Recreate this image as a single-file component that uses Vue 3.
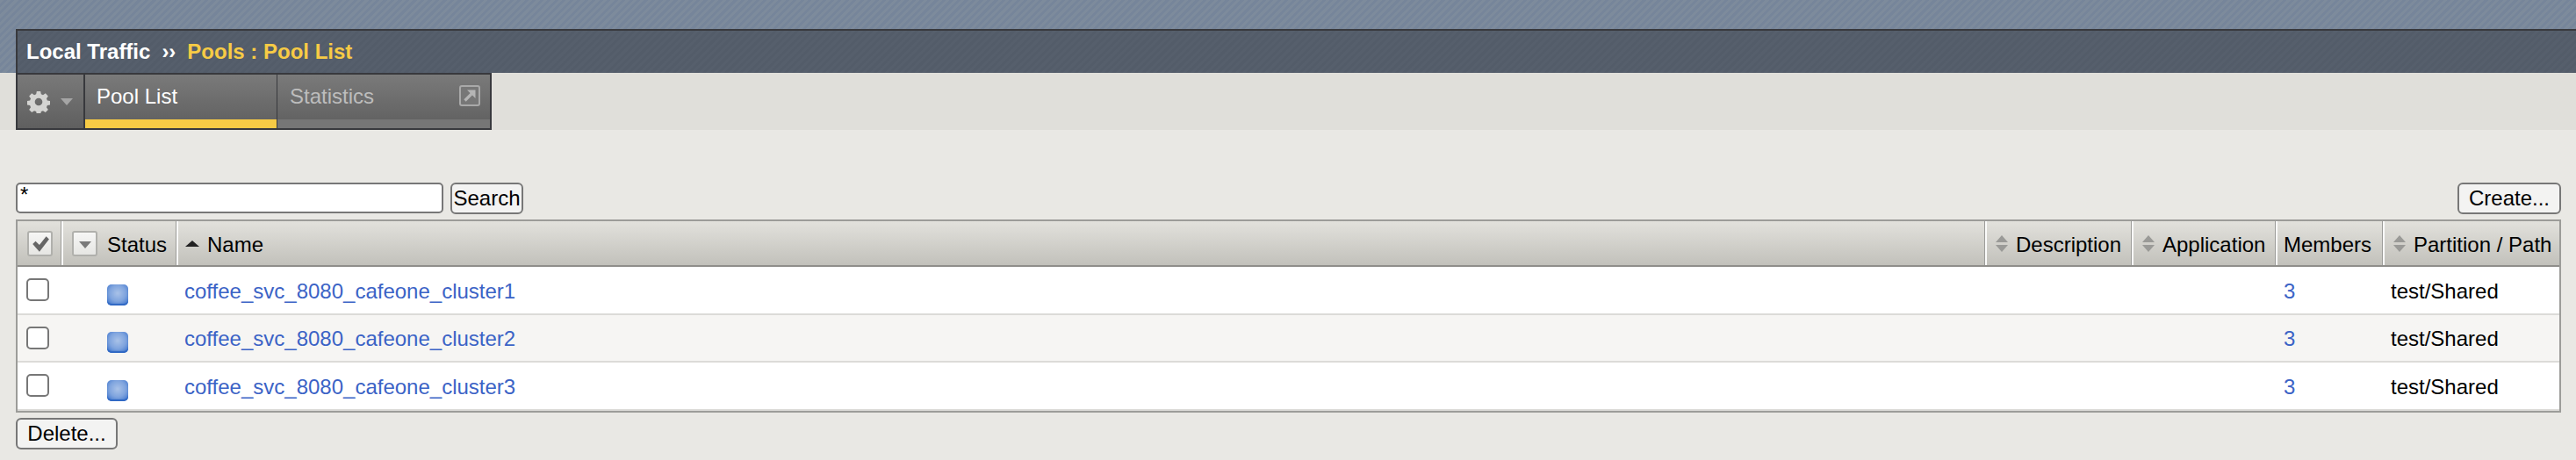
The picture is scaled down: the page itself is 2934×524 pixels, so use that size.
<script setup>
const pools = [
  { name: "coffee_svc_8080_cafeone_cluster1", members: 3, path: "test/Shared" },
  { name: "coffee_svc_8080_cafeone_cluster2", members: 3, path: "test/Shared" },
  { name: "coffee_svc_8080_cafeone_cluster3", members: 3, path: "test/Shared" },
];
</script>

<template>
  <div class="page">
    <div class="banner">
      <div class="crumbs">
        <span class="crumb-root">Local Traffic</span>
        <span class="crumb-sep">››</span>
        <span class="crumb-current">Pools : Pool List</span>
      </div>
    </div>

    <div class="tabbar">
      <div class="tabs">
        <div class="tab-menu">
          <svg class="gear" width="26" height="26" viewBox="0 0 24 24">
            <path
              fill="#d4d4d2"
              fill-rule="evenodd"
              d="M10 1h4l.6 3 2 .8 2.6-1.7 2.8 2.8-1.7 2.6.8 2 3 .6v4l-3 .6-.8 2 1.7 2.6-2.8 2.8-2.6-1.7-2 .8-.6 3h-4l-.6-3-2-.8-2.6 1.7-2.8-2.8 1.7-2.6-.8-2-3-.6v-4l3-.6.8-2-1.7-2.6 2.8-2.8 2.6 1.7 2-.8zM12 8a4 4 0 1 0 0 8 4 4 0 0 0 0-8z"
            />
          </svg>
          <span class="menu-arrow"></span>
        </div>
        <div class="tab active">Pool List</div>
        <div class="tab stats">
          <span>Statistics</span>
          <svg class="soft" width="24" height="24" viewBox="0 0 24 24">
            <rect x="1" y="1" width="22" height="22" rx="2" fill="#777" stroke="#a9a9a9" stroke-width="2" />
            <path d="M6.5 17.5l8-8" stroke="#b5b5b5" stroke-width="3.2" fill="none" />
            <path d="M9 5.5h9.5V15z" fill="#b5b5b5" />
          </svg>
        </div>
      </div>
    </div>

    <div class="content">
      <div class="toolbar">
        <input class="search" type="text" value="*" />
        <button class="btn search-btn">Search</button>
        <button class="btn create-btn">Create...</button>
      </div>

      <div class="list">
        <div class="row head">
          <div class="cell">
            <span class="head-box">
              <svg class="soft" width="22" height="20" viewBox="0 0 20 18">
                <path d="M2 9l3-3 4 4 7-9 3 3-10 13z" fill="#666" />
              </svg>
            </span>
          </div>
          <div class="cell status-head">
            <span class="head-box small"><span class="box-arrow"></span></span>
            <span>Status</span>
          </div>
          <div class="cell name-head"><span class="sort-up"></span>Name</div>
          <div class="cell sortable"><span class="sort-both"></span>Description</div>
          <div class="cell sortable"><span class="sort-both"></span>Application</div>
          <div class="cell members-head">Members</div>
          <div class="cell sortable"><span class="sort-both"></span>Partition / Path</div>
        </div>

        <div v-for="pool in pools" :key="pool.name" class="row item">
          <div class="cell check-cell"><input class="check" type="checkbox" /></div>
          <div class="cell status-cell"><span class="status-dot"></span></div>
          <div class="cell name-cell"><a class="link">{{ pool.name }}</a></div>
          <div class="cell"></div>
          <div class="cell"></div>
          <div class="cell members-cell"><a class="link">{{ pool.members }}</a></div>
          <div class="cell path-cell">{{ pool.path }}</div>
        </div>
      </div>

      <button class="btn delete-btn">Delete...</button>
    </div>
  </div>
</template>

<style>
html,
body {
  margin: 0;
  background: #e9e8e4;
  overflow: hidden;
}
</style>

<style scoped>
.page {
  height: 524px;
  overflow: hidden;
  font-family: "Liberation Sans", Arial, sans-serif;
  background: #e9e8e4;
}

/* 顶部条纹区 */
.banner {
  box-sizing: border-box;
  height: 83px;
  padding: 33px 0 0 18px;
  background: repeating-linear-gradient(135deg, #7d8b9c 0 3px, #76859a 3px 6px);
}
.crumbs {
  box-sizing: border-box;
  height: 50px;
  display: flex;
  align-items: center;
  padding-left: 10px;
  border: 2px solid #38393d;
  border-right: 0;
  border-bottom: 0;
  font-size: 24px;
  font-weight: bold;
  background: repeating-linear-gradient(135deg, #565f6c 0 3px, #535c69 3px 6px);
}
.crumb-root {
  color: #fff;
}
.crumb-sep {
  color: #fff;
  margin: 0 13px;
}
.crumb-current {
  color: #f7cb45;
}

/* 标签栏 */
.tabbar {
  height: 65px;
  padding-left: 18px;
  background: #e0dfda;
}
.tabs {
  box-sizing: border-box;
  width: 542px;
  height: 65px;
  display: flex;
  border: 2px solid #38393d;
  font-size: 24px;
  background: #38393d;
}
.tab-menu {
  box-sizing: border-box;
  width: 75px;
  flex: none;
  display: flex;
  align-items: center;
  gap: 12px;
  padding-left: 11px;
  background: linear-gradient(#797979, #5f5f5f);
}
.gear,
.soft {
  filter: blur(0.5px);
}
.menu-arrow {
  width: 0;
  height: 0;
  border: 7px solid transparent;
  border-top: 8px solid #a5a5a5;
  border-bottom: 0;
}
.tab {
  box-sizing: border-box;
  padding-top: 7px;
  padding-left: 13px;
  background: linear-gradient(#7a7a7a, #636363);
  line-height: 36px;
}
.tab.active {
  width: 218px;
  margin-left: 2px;
  color: #fff;
  border-bottom: 10px solid #f7cb45;
}
.tab.stats {
  flex: 1;
  margin-left: 1px;
  display: flex;
  align-items: flex-start;
  justify-content: space-between;
  padding-right: 11px;
  padding-left: 14px;
  color: #bdbdbd;
  border-bottom: 10px solid #767676;
}
.tab.stats svg {
  margin-top: 5px;
}

/* 内容区 */
.content {
  width: 2899px;
  padding: 60px 0 0 18px;
}
.toolbar {
  display: flex;
  align-items: stretch;
  height: 35px;
  margin-bottom: 7px;
}
.search {
  box-sizing: border-box;
  width: 487px;
  height: 35px;
  padding: 0 0 8px 3px;
  border: 2px solid #777;
  border-radius: 5px;
  background: #fff;
  font: 24px "Liberation Sans", Arial, sans-serif;
  color: #000;
  outline: none;
}
.btn {
  box-sizing: border-box;
  height: 36px;
  padding: 0;
  border: 2px solid #777;
  border-radius: 6px;
  background: #f3f3f2;
  font: 24px "Liberation Sans", Arial, sans-serif;
  color: #000;
}
.search-btn {
  width: 83px;
  margin-left: 8px;
}
.create-btn {
  width: 118px;
  margin-left: auto;
}
.delete-btn {
  display: block;
  width: 116px;
  margin-top: 6px;
}

/* 列表 */
.list {
  box-sizing: border-box;
  height: 220px;
  border: 2px solid #9c9c99;
}
.row {
  display: grid;
  grid-template-columns: 52px 131px 2060px 167px 164px 122px 1fr;
}
.head {
  box-sizing: border-box;
  height: 52px;
  border-bottom: 2px solid #8f8e8a;
  font-size: 24px;
  color: #000;
}
.head .cell {
  box-sizing: border-box;
  display: flex;
  align-items: center;
  padding-top: 4px;
  border-right: 2px solid #fbfbfa;
  box-shadow: inset -1px 0 0 #9c9c99;
  background: linear-gradient(#e2e1dc, #c2c1bb);
}
.head .cell:last-child {
  border-right: 0;
  box-shadow: none;
}
.head-box {
  box-sizing: border-box;
  width: 29px;
  height: 29px;
  margin-left: 11px;
  margin-top: -3px;
  display: flex;
  align-items: center;
  justify-content: center;
  border: 2px solid #b0b0ac;
  border-radius: 3px;
  background: linear-gradient(#f6f6f5, #e6e6e3);
}
.head-box.small {
  margin-left: 10px;
  margin-right: 11px;
}
.box-arrow {
  width: 0;
  height: 0;
  border: 7px solid transparent;
  border-top: 8px solid #7a7a7a;
  border-bottom: 0;
  margin-top: 2px;
}
.name-head {
  padding-left: 8px;
}
.sort-up {
  width: 0;
  height: 0;
  margin-top: -3px;
  border: 8px solid transparent;
  border-bottom: 7px solid #222;
  border-top: 0;
  margin-right: 9px;
}
.sortable {
  padding-left: 10px;
}
.sort-both {
  position: relative;
  width: 14px;
  height: 19px;
  margin-top: -3px;
  margin-right: 9px;
}
.sort-both::before,
.sort-both::after {
  content: "";
  position: absolute;
  left: 0;
  border: 7px solid transparent;
}
.sort-both::before {
  top: 0;
  border-top: 0;
  border-bottom: 8px solid #9a9a97;
}
.sort-both::after {
  bottom: 0;
  border-bottom: 0;
  border-top: 8px solid #9a9a97;
}
.members-head {
  padding-left: 7px;
}

.item {
  box-sizing: border-box;
  height: 54.67px;
  font-size: 24px;
  color: #000;
  background: #fff;
  border-bottom: 2px solid #dcdbd8;
}
.item:nth-child(3) {
  background: #f6f5f3;
}
.cell {
  min-width: 0;
}
.item .cell {
  display: flex;
  align-items: center;
  padding-top: 3px;
}
.check-cell {
  padding-left: 10px;
  align-items: flex-start !important;
}
.check {
  appearance: none;
  box-sizing: border-box;
  width: 26px;
  height: 26px;
  margin: 10px 0 0;
  border: 2px solid #777;
  border-radius: 5px;
  background: #fff;
}
.status-cell {
  padding-left: 50px;
}
.status-dot {
  box-sizing: border-box;
  width: 24px;
  height: 24px;
  margin-top: 8px;
  border-radius: 5px;
  background: radial-gradient(ellipse 70% 70% at 50% 42%, #a9c2e8 0, #7fa4de 55%, #3d74cc 100%);
  box-shadow: inset 0 -2px 1px #2f68c4;
  filter: blur(0.5px);
}
.name-cell {
  padding-left: 7px;
}
.link {
  color: #3b63c6;
}
.members-cell {
  padding-left: 7px;
}
.path-cell {
  padding-left: 7px;
}
</style>
